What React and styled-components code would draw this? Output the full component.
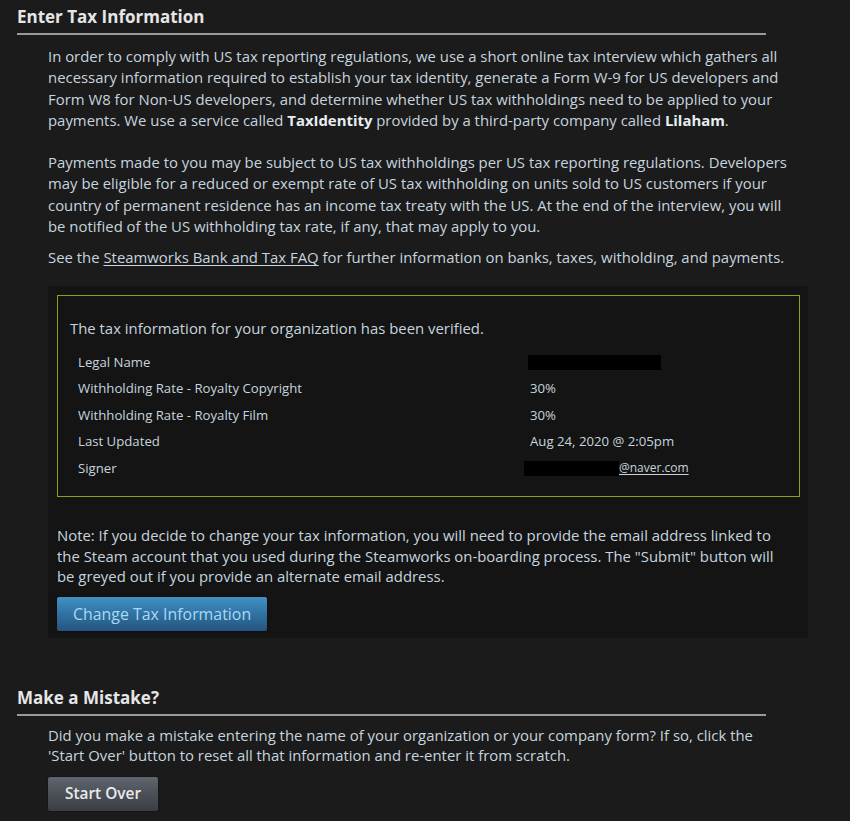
import styled, { createGlobalStyle } from 'styled-components';

const GlobalStyle = createGlobalStyle`
  body {
    margin: 0;
    background-color: #1b1b1b;
    font-family: "Open Sans", "Liberation Sans", Arial, sans-serif;
    color: #c6d4df;
  }
`;

const Page = styled.div`
  width: 850px;
  min-height: 821px;
  padding-top: 6px;
  box-sizing: border-box;
`;

const Section = styled.section`
  margin-bottom: ${props => props.$gap || 0}px;
`;

const SectionTitle = styled.h2`
  margin: 0 0 0 17px;
  width: 749px;
  padding-bottom: 5px;
  border-bottom: 2px solid #9a9a9a;
  font-size: 17px;
  line-height: 22px;
  font-weight: 700;
  color: #e6e6e6;
`;

const SectionBody = styled.div`
  margin-left: 48px;
  width: 760px;
  padding-top: ${props => props.$top || 10}px;
`;

const Text = styled.p`
  margin: 0 0 ${props => props.$after || 0}px;
  font-size: 14.9px;
  line-height: ${props => props.$lh || 21.3}px;
  color: #c6d4df;
  white-space: nowrap;
`;

const Strong = styled.b`
  font-weight: 700;
  color: #e6eef4;
`;

const Link = styled.a`
  color: #c6d4df;
  text-decoration: underline;
  text-underline-offset: 2px;
`;

const Panel = styled.div`
  margin-top: 17px;
  background-color: #141414;
  padding: 9px 8px 7px 9px;
`;

const VerifiedBox = styled.div`
  border: 1px solid #8aa21a;
  padding: 22px 12px 15px 12px;
`;

const InfoTable = styled.div`
  display: grid;
  grid-template-columns: 452px 1fr;
  margin-top: 10px;
  padding-left: 8px;
`;

const Cell = styled.div`
  font-size: 13.2px;
  line-height: 26.5px;
  color: #c6d4df;
  white-space: nowrap;
  display: flex;
  align-items: center;
`;

const Redacted = styled.span`
  display: inline-block;
  width: ${props => props.$w}px;
  height: 15px;
  background: #000;
  margin-left: ${props => props.$shift || 0}px;
`;

const MailLink = styled.a`
  font-size: 12px;
  color: #c6d4df;
  text-decoration: underline;
  text-underline-offset: 2px;
`;

const Note = styled.p`
  margin: 28px 0 10px;
  font-size: 14.9px;
  line-height: 20.5px;
  color: #c6d4df;
  white-space: nowrap;
`;

const Button = styled.button`
  display: inline-flex;
  align-items: center;
  justify-content: center;
  height: 34px;
  padding: 0 ${props => props.$px || 16}px;
  border: none;
  border-radius: 2px;
  font-family: "Open Sans", "Liberation Sans", Arial, sans-serif;
  font-size: ${props => props.$variant === 'blue' ? 15.9 : 15.4}px;
  cursor: pointer;
  background: ${props => props.$variant === 'blue'
    ? 'linear-gradient(to bottom, #4190c6 0%, #3072a2 50%, #25557e 100%)'
    : 'linear-gradient(to bottom, #60666d 0%, #4b5057 50%, #3a3e44 100%)'};
  color: ${props => props.$variant === 'blue' ? '#a9d9f7' : '#eaeaea'};
  font-weight: ${props => props.$variant === 'blue' ? 400 : 600};
  box-shadow: 0 0 2px rgba(0, 0, 0, 0.6);
`;

const rows = [
  { label: 'Legal Name', value: <Redacted $w={133} $shift={-2} /> },
  { label: 'Withholding Rate - Royalty Copyright', value: '30%' },
  { label: 'Withholding Rate - Royalty Film', value: '30%' },
  { label: 'Last Updated', value: 'Aug 24, 2020 @ 2:05pm' },
  {
    label: 'Signer',
    value: (
      <>
        <Redacted $w={95} $shift={-6} />
        <MailLink href="#">@naver.com</MailLink>
      </>
    )
  }
];

const App = () => {
  return (
    <Page>
      <GlobalStyle />
      <Section $gap={49}>
        <SectionTitle>Enter Tax Information</SectionTitle>
        <SectionBody $top={11}>
          <Text $after={21}>
            In order to comply with US tax reporting regulations, we use a short online tax interview which gathers all<br />
            necessary information required to establish your tax identity, generate a Form W-9 for US developers and<br />
            Form W8 for Non-US developers, and determine whether US tax withholdings need to be applied to your<br />
            payments. We use a service called <Strong>TaxIdentity</Strong> provided by a third-party company called <Strong>Lilaham</Strong>.
          </Text>
          <Text $after={10}>
            Payments made to you may be subject to US tax withholdings per US tax reporting regulations. Developers<br />
            may be eligible for a reduced or exempt rate of US tax withholding on units sold to US customers if your<br />
            country of permanent residence has an income tax treaty with the US. At the end of the interview, you will<br />
            be notified of the US withholding tax rate, if any, that may apply to you.
          </Text>
          <Text>
            See the <Link href="#">Steamworks Bank and Tax FAQ</Link> for further information on banks, taxes, witholding, and payments.
          </Text>
          <Panel>
            <VerifiedBox>
              <Text>The tax information for your organization has been verified.</Text>
              <InfoTable>
                {rows.map(row => (
                  <>
                    <Cell key={row.label}>{row.label}</Cell>
                    <Cell key={row.label + '-v'}>{row.value}</Cell>
                  </>
                ))}
              </InfoTable>
            </VerifiedBox>
            <Note>
              Note: If you decide to change your tax information, you will need to provide the email address linked to<br />
              the Steam account that you used during the Steamworks on-boarding process. The "Submit" button will<br />
              be greyed out if you provide an alternate email address.
            </Note>
            <Button $variant="blue" $px={16}>Change Tax Information</Button>
          </Panel>
        </SectionBody>
      </Section>
      <Section>
        <SectionTitle>Make a Mistake?</SectionTitle>
        <SectionBody $top={9}>
          <Text $lh={20.5} $after={11}>
            Did you make a mistake entering the name of your organization or your company form? If so, click the<br />
            'Start Over' button to reset all that information and re-enter it from scratch.
          </Text>
          <Button $px={17}>Start Over</Button>
        </SectionBody>
      </Section>
    </Page>
  );
};

export default App;
